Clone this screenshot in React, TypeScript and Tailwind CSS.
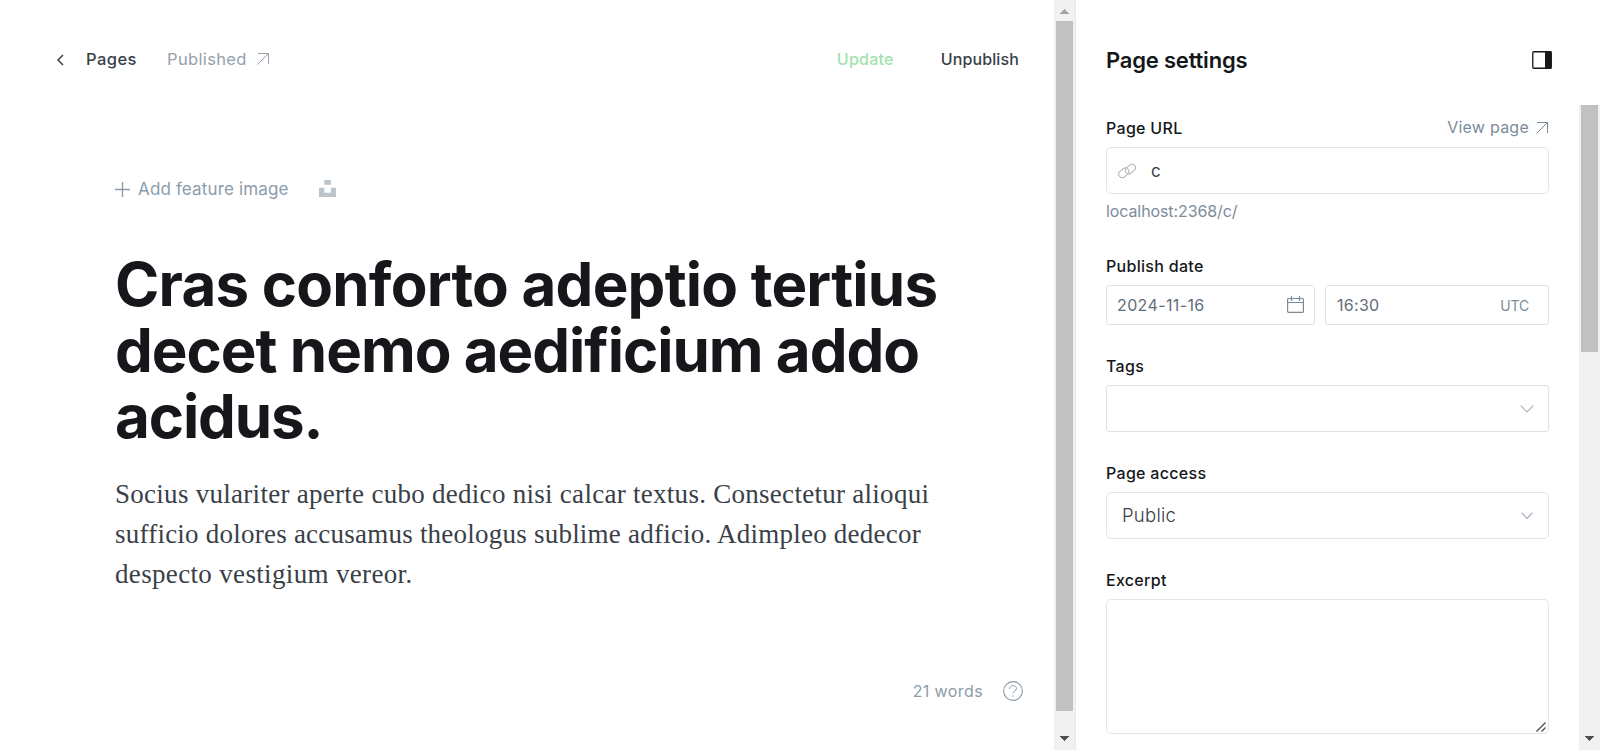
import type { ReactNode } from "react";

function ArrowOut({ className }: { className: string }) {
  return (
    <svg viewBox="0 0 12 12" className={className} fill="none" stroke="currentColor">
      <path d="M1 .5h10.5V11M11.5.5L.5 11.5" />
    </svg>
  );
}

function ScrollDown() {
  return (
    <svg viewBox="0 0 21 21" className="mt-auto h-[21px] w-[21px]" fill="#505050">
      <path d="M6 7h9v1h-1v1h-1v1h-1v1h-1v1h-1v-1H9v-1H8V9H7V8H6z" />
    </svg>
  );
}

function Label({ children }: { children: ReactNode }) {
  return <div className="h-5 text-[16px] leading-5 font-[450] tracking-[0.3px] text-[#15171a]">{children}</div>;
}

function Editor() {
  return (
    <main className="flex w-[1054px] flex-col">
      <header className="flex h-[118px] items-center pl-[56px] pr-[35px] text-[16px]">
        <svg viewBox="0 0 8 12" className="mt-[2px] h-3 w-2" fill="none" stroke="#394047" strokeWidth="1.5">
          <path d="M7 1L2 6l5 5" />
        </svg>
        <span className="ml-[22px] w-[81px] text-[16.5px] font-[450] tracking-[0.45px] text-[#394047]">Pages</span>
        <span className="w-[90px] text-[16.5px] tracking-[0.35px] text-[#95a1ad]">Published</span>
        <ArrowOut className="h-3 w-3 text-[#95a1ad]" />
        <span className="ml-auto font-medium tracking-[0.25px] text-[#9fe3ab]">Update</span>
        <span className="ml-[47px] font-[450] tracking-[0.12px] text-[#394047]">Unpublish</span>
      </header>
      <div className="ml-[115px] mt-[59px] flex h-6 items-center text-[17px] text-[#8b9cab]">
        <svg viewBox="0 0 15 15" className="h-[15px] w-[15px]" fill="none" stroke="currentColor">
          <path d="M7.500 0v15M0 7.500h15" strokeWidth="1.400" />
        </svg>
        <span className="ml-[8px] w-[181px] pt-[2px] tracking-[0.15px]">Add feature image</span>
        <svg viewBox="0 0 17 17" className="mb-[1px] h-[17px] w-[17px]" fill="#bcc4cb">
          <path d="M5.3 0h6.6v4.7H5.3zM0 7.8h5.3v5h6.6v-5H17V17H0z" />
        </svg>
      </div>
      <h1 className="ml-[115px] mt-[50px] text-[60px] leading-[66px] font-bold whitespace-nowrap text-[#15171a]">
        <div className="tracking-[-0.78px]">Cras conforto adeptio tertius</div>
        <div className="tracking-[-1px]">decet nemo aedificium addo</div>
        <div className="tracking-[-1.1px]">acidus.</div>
      </h1>
      <div className="ml-[115px] mt-[25px] font-['Georgia','Liberation_Serif',serif] text-[27px] leading-[40px] whitespace-nowrap text-[#394047]">
        <div className="tracking-[0.28px]">Socius vulariter aperte cubo dedico nisi calcar textus. Consectetur alioqui</div>
        <div className="tracking-[0.23px]">sufficio dolores accusamus theologus sublime adficio. Adimpleo dedecor</div>
        <div className="tracking-[0.34px]">despecto vestigium vereor.</div>
      </div>
      <footer className="mt-auto mb-[47px] flex h-6 items-center justify-end pr-[31px] text-[16px] text-[#8b9cab]">
        <span className="tracking-[0.4px]">21 words</span>
        <svg viewBox="0 0 20 20" className="ml-[20px] h-5 w-5" fill="none" stroke="currentColor">
          <circle cx="10" cy="10" r="9.4" strokeWidth="1.1" />
          <path d="M6.500 7.800c0-4.300 7-4.300 7-.3 0 2.500-3.500 2.200-3.500 5M10 14.400v1.400" />
        </svg>
      </footer>
    </main>
  );
}

function MainScrollbar() {
  return (
    <div className="flex w-[21px] flex-col items-center bg-[#f1f1f1]">
      <svg viewBox="0 0 21 21" className="h-[21px] w-[21px]" fill="#a3a3a3">
        <path d="M6 14h9v-1h-1v-1h-1v-1h-1v-1h-1V9h-1v1H9v1H8v1H7v1H6z" />
      </svg>
      <div className="h-[690px] w-[17px] bg-[#c1c1c1]" />
      <ScrollDown />
    </div>
  );
}

function Settings() {
  return (
    <aside className="flex flex-1 flex-col border-l border-[#e6e9eb]">
      <header className="flex h-[105px] items-center justify-between pt-[15px] pl-[30px] pr-[48px]">
        <h2 className="text-[22px] font-semibold tracking-[-0.2px] text-[#15171a]">Page settings</h2>
        <svg viewBox="0 0 20 18" className="h-[18px] w-5">
          <rect x=".75" y=".75" width="18.500" height="16.500" rx="1" fill="none" stroke="#15171a" strokeWidth="1.3" />
          <path d="M13 .5h6.500v17H13z" fill="#15171a" />
        </svg>
      </header>
      <div className="flex flex-1">
        <div className="ml-[30px] w-[443px]">
          <div className="flex justify-between pt-[13px]">
            <Label>Page URL</Label>
            <div className="flex h-[18px] items-center gap-[7px] pr-[1px] text-[16px] text-[#7c8b9a]">
              <span className="tracking-[0.25px]">View page</span>
              <ArrowOut className="mt-[2px] h-3 w-3" />
            </div>
          </div>
          <div className="mt-[9px] flex h-[47px] items-center rounded-[5px] border border-[#e3e6e8] pl-[11px]">
            <svg viewBox="0 0 18 16" className="h-4 w-[18px]" fill="none" stroke="#aeb0b2">
              <rect x="-5.500" y="-3.500" width="11" height="7" rx="3.500" transform="translate(5.800 9.800) rotate(-40)" />
              <rect x="-5.500" y="-3.500" width="11" height="7" rx="3.500" transform="translate(12.400 6) rotate(-40)" />
            </svg>
            <span className="ml-[15px] pt-[3px] text-[17px] text-[#394047]">c</span>
          </div>
          <div className="mt-[7px] h-5 text-[16px] leading-5 tracking-[-0.1px] text-[#7c8b9a]">localhost:2368/c/</div>
          <div className="mt-[35px]"><Label>Publish date</Label></div>
          <div className="mt-[9px] flex gap-[10px] text-[16px] text-[#626d79]">
            <div className="flex h-10 w-[209px] items-center justify-between rounded-[3px] border border-[#dfe3e6] px-[10px]">
              <span className="tracking-[0.38px]">2024-11-16</span>
              <svg viewBox="0 0 17 17" className="mb-[1px] h-[17px] w-[17px]" fill="none" stroke="#7c8b9a">
                <rect x=".6" y="2.500" width="15.800" height="13.900" rx="1" strokeWidth="1.200" />
                <path d="M.5 6.500h16M4.500 0v5M12.500 0v5" strokeWidth="1.200" />
              </svg>
            </div>
            <div className="flex h-10 w-[224px] items-center justify-between rounded-[3px] border border-[#dfe3e6] pl-[11px] pr-[19px]">
              <span className="tracking-[0.3px]">16:30</span>
              <span className="text-[14px] tracking-[-0.2px] text-[#7c8b9a]">UTC</span>
            </div>
          </div>
          <div className="mt-[31px]"><Label>Tags</Label></div>
          <div className="mt-[9px] flex h-[47px] items-center justify-end rounded-[3px] border border-[#dfe3e6] pr-[14px]">
            <svg viewBox="0 0 14 8" className="h-2 w-[14px]" fill="none" stroke="#abb4be" strokeWidth="1.200">
              <path d="M.7.7L7 7l6.300-6.300" />
            </svg>
          </div>
          <div className="mt-[31px]"><Label>Page access</Label></div>
          <div className="mt-[9px] flex h-[47px] items-center justify-between rounded-[5px] border border-[#e3e6e8] pl-[15px] pr-[15px]">
            <span className="text-[18.5px] font-[350] tracking-[0.25px] text-[#394047]">Public</span>
            <svg viewBox="0 0 12 8" className="h-2 w-3" fill="none" stroke="#abb4be" strokeWidth="1.300">
              <path d="M.7.7L6 6.500 11.300.7" />
            </svg>
          </div>
          <div className="mt-[31px]"><Label>Excerpt</Label></div>
          <div className="mt-[9px] flex h-[135px] items-end justify-end rounded-[5px] border border-[#e3e6e8] px-[2px] pb-[1px]">
            <svg viewBox="0 0 10 10" className="h-[10px] w-[10px]" fill="none" stroke="#505050" strokeWidth="1.400">
              <path d="M.5 9.500l9-9M5.500 9.500l4-4" />
            </svg>
          </div>
        </div>
        <div className="ml-auto flex w-[21px] flex-col items-center bg-[#f1f1f1]">
          <div className="h-[247px] w-[17px] bg-[#c1c1c1]" />
          <ScrollDown />
        </div>
      </div>
    </aside>
  );
}

export default function App() {
  return (
    <div className="flex h-[750px] w-[1600px] overflow-hidden bg-white font-['Inter',sans-serif]">
      <Editor />
      <MainScrollbar />
      <Settings />
    </div>
  );
}
